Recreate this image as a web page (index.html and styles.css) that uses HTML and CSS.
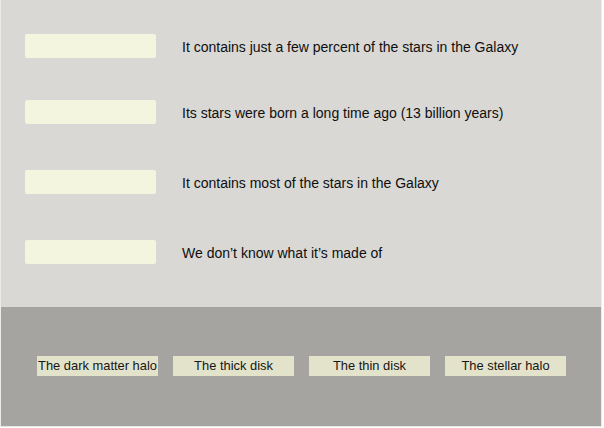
FILE: index.html
```html
<!DOCTYPE html>
<html>
<head>
<meta charset="utf-8">
<link rel="stylesheet" href="styles.css">
</head>
<body>
<div class="frame">
  <div class="matches">
    <div class="row first">
      <div class="slot"></div>
      <div class="clue">It contains just a few percent of the stars in the Galaxy</div>
    </div>
    <div class="row">
      <div class="slot"></div>
      <div class="clue">Its stars were born a long time ago (13 billion years)</div>
    </div>
    <div class="row">
      <div class="slot"></div>
      <div class="clue">It contains most of the stars in the Galaxy</div>
    </div>
    <div class="row">
      <div class="slot"></div>
      <div class="clue">We don’t know what it’s made of</div>
    </div>
  </div>
  <div class="tray">
    <div class="chip">The dark matter halo</div>
    <div class="chip">The thick disk</div>
    <div class="chip">The thin disk</div>
    <div class="chip">The stellar halo</div>
  </div>
</div>
</body>
</html>
```
FILE: styles.css
```css
html, body {
  margin: 0;
  padding: 0;
  background: #ffffff;
}
body {
  font-family: "Liberation Sans", Arial, sans-serif;
  color: #111111;
}
.frame {
  width: 600px;
  height: 426px;
  border-left: 1px solid #ebebe9;
  border-right: 1px solid #ebebe9;
  border-bottom: 1px solid #e6e6e4;
  display: flex;
  flex-direction: column;
}
.matches {
  height: 307px;
  background: #d9d8d4;
  padding: 0 0 0 24px;
  box-sizing: border-box;
  flex: none;
}
.row {
  display: flex;
  align-items: center;
  height: 24px;
}
.row.first {
  margin-top: 34px;
}
.row + .row {
  margin-top: 42px;
}
.row + .row + .row {
  margin-top: 46px;
}
.slot {
  width: 131px;
  height: 24px;
  background: #f3f5df;
  border-radius: 2px;
  flex: none;
}
.clue {
  margin-left: 26px;
  padding-top: 1px;
  font-size: 14px;
  color: #0f0f0f;
}
.tray {
  flex: 1;
  background: #a5a4a0;
  display: flex;
  align-items: flex-start;
  padding: 49px 0 0 36px;
  gap: 15px;
}
.chip {
  width: 121px;
  height: 20px;
  background: #e3e3cc;
  font-size: 12.9px;
  line-height: 20px;
  text-align: center;
  color: #161616;
  white-space: nowrap;
  display: flex;
  justify-content: center;
}
```
